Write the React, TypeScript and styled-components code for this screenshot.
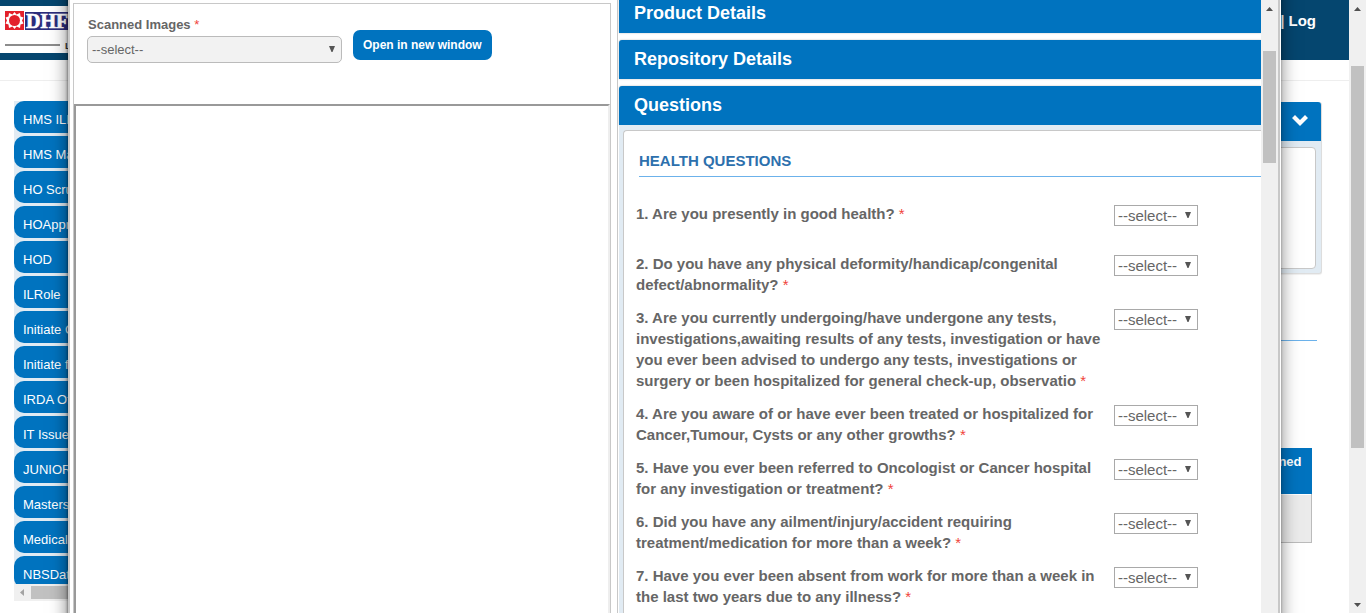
import React from 'react';
import styled, { createGlobalStyle } from 'styled-components';

const blue = '#0073bf';
const navy = '#05466f';
const line = '#c8c8c8';
const tint = '#e1ebf3';

const GlobalStyle = createGlobalStyle`
  *, *::before, *::after { box-sizing: border-box; }
  body {
    margin: 0;
    background: #fff;
    color: #666;
    font-family: "Liberation Sans", Arial, sans-serif;
    font-size: 13px;
    overflow: hidden;
  }
  button, select { font-family: inherit; }
`;

const Shell = styled.div`
  position: relative;
  display: flex;
  height: 100vh;
  overflow: hidden;
`;

const Page = styled.div`
  flex: 1;
  min-width: 0;
  overflow: hidden;
`;

const TopBar = styled.header`
  display: flex;
  justify-content: space-between;
  align-items: flex-start;
  height: 60px;
  padding: 6px 33px 7px 0;
  background: ${navy};
`;

const LogoPlate = styled.div`
  width: 200px;
  height: 47px;
  background: #fff;
`;

const LogLink = styled.a`
  color: #fff;
  font-size: 15px;
  font-weight: bold;
  line-height: 30px;
  text-decoration: none;
`;

const Divider = styled.hr`
  margin: 20px 0;
  border: 0;
  border-top: 1px solid #eee;
`;

const Columns = styled.div`
  display: flex;
  gap: 28px;
  padding: 0 27px 0 14px;
`;

const Sidebar = styled.nav`
  width: 220px;
  flex: none;
`;

const RoleList = styled.ul`
  height: 483px;
  margin: 0;
  padding: 0;
  overflow: hidden;
  list-style: none;
  background: ${tint};
`;

const RoleItem = styled.li`
  margin-bottom: 3px;
`;

const RoleButton = styled.button`
  display: block;
  width: 100%;
  height: 32px;
  padding: 4px 9px 0;
  border: 0;
  border-radius: 10px;
  background: ${blue};
  color: #fff;
  font-size: 13px;
  text-align: left;
`;

const SideScroll = styled.div`
  display: flex;
  align-items: center;
  height: 17px;
  padding: 2px 0;
  background: #f0f0f0;
`;

const SideThumb = styled.div`
  width: 60%;
  height: 13px;
  background: #c1c1c1;
`;

const Main = styled.main`
  flex: 1;
  min-width: 0;
`;

const Card = styled.section`
  margin-top: 1px;
  padding-bottom: 4px;
  border: 1px solid #ddd;
  border-top: 0;
  border-left: 0;
  border-radius: 3px;
  background: ${tint};
  box-shadow: 0 1px 1px #0001;
`;

const CardHead = styled.div`
  display: flex;
  justify-content: flex-end;
  align-items: center;
  height: 39px;
  padding: 0 13px 3px;
  border-radius: 0 3px 0 0;
  background: ${blue};
`;

const CardBody = styled.div`
  height: 122px;
  margin: 6px 5px 0;
  border: 1px solid ${line};
  border-radius: 4px;
  background: #fff;
`;

const Results = styled.div`
  margin: 66px 5px 0 0;
  padding: 107px 5px 0 0;
  border-top: 1px solid #6cb2eb;
`;

const DataTable = styled.table`
  width: 100%;
  border-collapse: collapse;
  th {
    height: 46px;
    padding: 6px 10px;
    background: ${blue};
    color: #fff;
    font-size: 13px;
    text-align: right;
    vertical-align: top;
  }
  td {
    height: 48px;
    border: 1px solid #bbb;
    border-top-color: #fff;
    background: #ebebeb;
  }
`;

const Track = styled.div`
  display: flex;
  flex-direction: column;
  flex: none;
  width: 17px;
  background: #f0f0f0;
`;

const ArrowCell = styled.div`
  display: flex;
  align-items: center;
  justify-content: center;
  height: 17px;
  flex: none;
`;

const Gap = styled.div<{ $grow: number }>`
  flex: ${p => p.$grow} 1 0;
`;

const Thumb = styled(Gap)`
  margin: 0 2px;
  background: #c1c1c1;
`;

const Dialog = styled.div`
  position: absolute;
  inset: -24px 86px -24px 68px;
  display: grid;
  grid-template-columns: minmax(0, 538fr) minmax(0, 661fr);
  gap: 6px;
  padding: 24px 0 0 3px;
  border: 2px solid ${line};
  border-width: 0 2px;
  background: #fff;
  box-shadow: 1px 0 0 #fff, 0 0 3px #0009, 0 0 17px #0008;
`;

const ScanPane = styled.section`
  display: flex;
  flex-direction: column;
  min-height: 0;
  margin-top: 3px;
  border: 1px solid ${line};
  border-bottom: 0;
`;

const ScanForm = styled.form`
  display: flex;
  align-items: flex-start;
  gap: 11px;
  height: 100px;
  padding: 12px 13px;
`;

const ScanField = styled.div`
  width: 50%;
`;

const ScanLabel = styled.label`
  display: block;
  margin-bottom: 2px;
  padding-left: 1px;
  font-weight: bold;
  line-height: 18px;
`;

const Star = styled.span`
  color: #f0433a;
  font-weight: normal;
`;

const OpenButton = styled.button`
  height: 30px;
  margin-top: 14px;
  padding: 0 10px;
  border: 0;
  border-radius: 7px;
  background: ${blue};
  color: #fff;
  font-size: 12px;
  font-weight: bold;
  white-space: nowrap;
`;

const Viewer = styled.div`
  flex: 1;
  border: 2px solid #999;
  border-color: #999 #eee #eee #999;
`;

const SelectBox = styled.div`
  display: grid;
  align-items: center;
  > * { grid-area: 1 / 1; }
  > svg {
    justify-self: end;
    margin: 0 7px 2px 0;
    pointer-events: none;
  }
`;

const Picker = styled.select<{ $soft?: boolean }>`
  width: 100%;
  height: ${p => (p.$soft ? 27 : 21)}px;
  padding: 0 ${p => (p.$soft ? 4 : 3)}px;
  appearance: none;
  border: 1px solid ${p => (p.$soft ? '#bbb' : '#a9a9a9')};
  border-radius: ${p => (p.$soft ? 5 : 0)}px;
  background: ${p => (p.$soft ? '#f2f2f2' : '#fff')};
  color: #666;
  font-size: ${p => (p.$soft ? 13 : 15)}px;
`;

const DetailPane = styled.section`
  display: flex;
  min-height: 0;
`;

const DetailScroll = styled.div`
  flex: 1;
  min-width: 0;
  overflow: hidden;
  border-left: 1px solid ${line};
`;

const Accordion = styled.div`
  display: flex;
  flex-direction: column;
  gap: 7px;
  margin-top: -6px;
  padding-left: 1px;
`;

const AccordionHead = styled.button`
  display: block;
  width: 100%;
  height: 39px;
  padding: 0 15px;
  border: 0;
  border-radius: 3px 0 0 0;
  background: ${blue};
  box-shadow: 0 0 2px #0004;
  color: #fff;
  font-size: 18px;
  font-weight: bold;
  text-align: left;
`;

const QuestionsBack = styled.div`
  padding: 5px 0 0 4px;
  background: ${tint};
`;

const QuestionsBox = styled.div`
  padding: 18px 0 20px 12px;
  border: 1px solid ${line};
  border-right: 0;
  border-radius: 4px 0 0 0;
  background: #fff;
`;

const GroupTitle = styled.h3`
  margin: 0 0 26px 3px;
  padding-bottom: 4px;
  border-bottom: 1px solid #6cb2eb;
  color: #2d70ad;
  font-size: 15px;
  line-height: 23px;
`;

const Question = styled.div`
  display: grid;
  grid-template-columns: minmax(0, 13fr) minmax(0, 4fr);
  align-items: start;
  min-height: 50px;
  padding-bottom: 12px;
`;

const QuestionLabel = styled.label`
  padding-right: 8px;
  font-size: 15px;
  font-weight: bold;
  line-height: 21px;
`;

const Answer = styled.div`
  width: 84px;
  margin-top: 2px;
`;

const roles = [
  'HMS ILRole', 'HMS Maker', 'HO Scrutiny', 'HOApprover', 'HOD', 'ILRole',
  'Initiate Claim', 'Initiate fund', 'IRDA Officer', 'IT Issue', 'JUNIOR',
  'Masters', 'Medical', 'NBSData',
];

const questions = [
  'Are you presently in good health?',
  'Do you have any physical deformity/handicap/congenital defect/abnormality?',
  'Are you currently undergoing/have undergone any tests, investigations,awaiting results of any tests, investigation or have you ever been advised to undergo any tests, investigations or surgery or been hospitalized for general check-up, observatio',
  'Are you aware of or have ever been treated or hospitalized for Cancer,Tumour, Cysts or any other growths?',
  'Have you ever been referred to Oncologist or Cancer hospital for any investigation or treatment?',
  'Did you have any ailment/injury/accident requiring treatment/medication for more than a week?',
  'Have you ever been absent from work for more than a week in the last two years due to any illness?',
];

function Dropdown({ id, soft }: { id: string; soft?: boolean }) {
  return (
    <SelectBox>
      <Picker id={id} $soft={soft}>
        <option>--select--</option>
      </Picker>
      <svg width="6" height="6" viewBox="0 0 6 6" aria-hidden="true">
        <path d="M0 0h6L3.500 6h-1z" fill="#555" />
      </svg>
    </SelectBox>
  );
}

function Scrollbar({ before, thumb, after }: { before: number; thumb: number; after: number }) {
  return (
    <Track>
      <ArrowCell>
        <svg width="7" height="4" viewBox="0 0 7 4"><path d="M0 4h7L3.500 0z" fill="#505050" /></svg>
      </ArrowCell>
      <Gap $grow={before} />
      <Thumb $grow={thumb} />
      <Gap $grow={after} />
      <ArrowCell>
        <svg width="7" height="4" viewBox="0 0 7 4"><path d="M0 0h7L3.500 4z" fill="#505050" /></svg>
      </ArrowCell>
    </Track>
  );
}

function Logo() {
  return (
    <svg width="120" height="47" viewBox="0 0 120 47" role="img" aria-label="DHFL">
      <rect x="5" y="5" width="19" height="19" fill="#e3202b" />
      <path
        d="M14.500 6l2 2.500 3.500-1.500.5 3.500 3 1-1.500 3 1.500 3-3 1-.5 3.500-3.500-1.500-2 2.500-2-2.500-3.500 1.500-.5-3.500-3-1 1.500-3-1.500-3 3-1 .5-3.500 3.500 1.500z"
        fill="#fff"
      />
      <circle cx="14.500" cy="14.500" r="5.500" fill="#e3202b" />
      <rect x="25" y="6" width="85" height="18" fill="#2b2d7c" />
      <text x="26" y="22" fill="#fff" stroke="#fff" strokeWidth="0.7" fontFamily="Liberation Serif, serif" fontSize="20" fontWeight="bold">DHFL</text>
      <path d="M5 39h55" stroke="#8c8c8c" strokeWidth="2" />
      <text x="65" y="43" fill="#333" fontFamily="Liberation Sans, sans-serif" fontSize="9" fontWeight="bold">Life</text>
    </svg>
  );
}

export default function App() {
  return (
    <>
      <GlobalStyle />
      <Shell>
        <Page>
          <TopBar>
            <LogoPlate><Logo /></LogoPlate>
            <LogLink href="#log">| Log</LogLink>
          </TopBar>
          <Divider />
          <Columns>
            <Sidebar>
              <RoleList>
                {roles.map(role => (
                  <RoleItem key={role}><RoleButton type="button">{role}</RoleButton></RoleItem>
                ))}
              </RoleList>
              <SideScroll>
                <ArrowCell as="span">
                  <svg width="17" height="7" viewBox="0 0 17 7"><path d="M10 0v7L6 3.500z" fill="#a3a3a3" /></svg>
                </ArrowCell>
                <SideThumb />
              </SideScroll>
            </Sidebar>
            <Main>
              <Card>
                <CardHead>
                  <svg width="16" height="11" viewBox="0 0 16 11" aria-hidden="true">
                    <path d="M3 0l5 5 5-5 3 3-8 8-8-8z" fill="#fff" />
                  </svg>
                </CardHead>
                <CardBody />
              </Card>
              <Results>
                <DataTable>
                  <thead><tr><th scope="col">Assigned</th></tr></thead>
                  <tbody><tr><td /></tr></tbody>
                </DataTable>
              </Results>
            </Main>
          </Columns>
        </Page>
        <Scrollbar before={49} thumb={382} after={148} />

        <Dialog role="dialog" aria-label="Proposal details">
          <ScanPane>
            <ScanForm>
              <ScanField>
                <ScanLabel htmlFor="scans">Scanned Images <Star>*</Star></ScanLabel>
                <Dropdown id="scans" soft />
              </ScanField>
              <OpenButton type="button">Open in new window</OpenButton>
            </ScanForm>
            <Viewer />
          </ScanPane>
          <DetailPane>
            <DetailScroll>
              <Accordion>
                <AccordionHead type="button">Product Details</AccordionHead>
                <AccordionHead type="button">Repository Details</AccordionHead>
                <div>
                  <AccordionHead type="button">Questions</AccordionHead>
                  <QuestionsBack>
                    <QuestionsBox>
                      <GroupTitle>HEALTH QUESTIONS</GroupTitle>
                      {questions.map((text, i) => (
                        <Question key={text}>
                          <QuestionLabel htmlFor={`q${i + 1}`}>
                            {`${i + 1}. ${text} `}<Star>*</Star>
                          </QuestionLabel>
                          <Answer><Dropdown id={`q${i + 1}`} /></Answer>
                        </Question>
                      ))}
                    </QuestionsBox>
                  </QuestionsBack>
                </div>
              </Accordion>
            </DetailScroll>
            <Scrollbar before={34} thumb={112} after={457} />
          </DetailPane>
        </Dialog>
      </Shell>
    </>
  );
}
